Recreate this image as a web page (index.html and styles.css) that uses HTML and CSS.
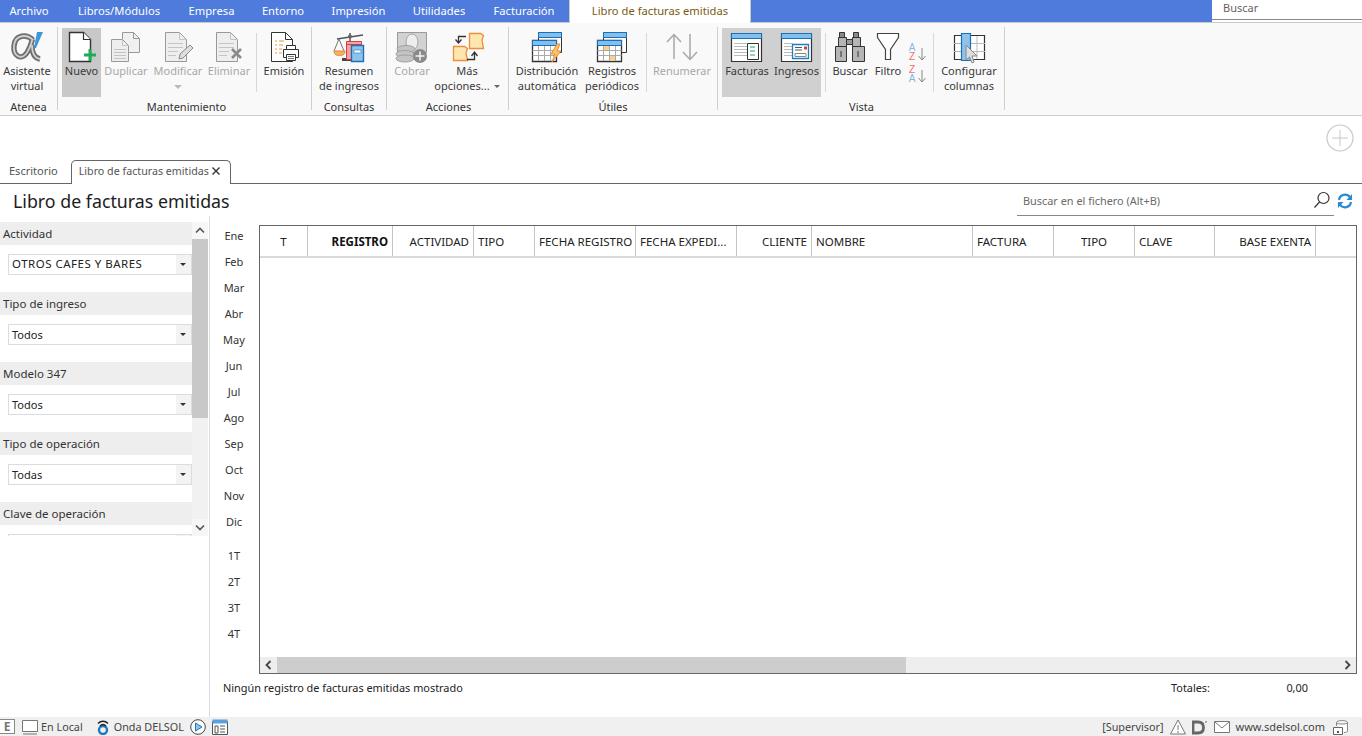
FILE: index.html
```html
<!DOCTYPE html>
<html lang="es">
<head>
<meta charset="utf-8">
<title>Libro de facturas emitidas</title>
<link rel="stylesheet" href="styles.css">
</head>
<body>
<div class="app">
  <nav class="menubar">
    <span class="mtab t63">Archivo</span>
    <span class="mtab t112">Libros/Módulos</span>
    <span class="mtab t73">Empresa</span>
    <span class="mtab t70">Entorno</span>
    <span class="mtab t81">Impresión</span>
    <span class="mtab t80">Utilidades</span>
    <span class="mtab t90">Facturación</span>
    <span class="mtab active">Libro de facturas emitidas</span>
    <span class="spacer"></span>
    <span class="topsearch"><span class="topsearch-in">Buscar</span></span>
  </nav>

  <section class="ribbon">
    <div class="group g-atenea">
      <div class="btns">
        <div class="btn w54">
          <svg class="ico" viewBox="0 0 40 32"><path d="M26 9C20 3 8 3 7 15C6 25 14 29 19 23C22 19 24 14 25.500 8M25 14C25 22 27 27 33 28" fill="none" stroke="#6f6f6f" stroke-width="5.400"/><path d="M26 9C20 3 8 3 7 15C6 25 14 29 19 23C22 19 24 14 25.500 8M25 14C25 22 27 27 33 28" fill="none" stroke="#cfcfcf" stroke-width="1.800"/><path d="M30 1H36L29 17H27Z" fill="#3f97d8"/></svg>
          <span class="lbl">Asistente<br>virtual</span>
        </div>
      </div>
      <div class="gname">Atenea</div>
    </div>

    <div class="group g-mant">
      <div class="btns">
        <div class="btn w39 on">
          <svg class="ico" viewBox="0 0 40 32"><path d="M7.5 1.5H21.500L28.500 8.500V30.500H7.500Z" fill="#fff" stroke="#333" stroke-width="1.400"/><path d="M21.500 1.500V8.500H28.500" fill="#fff" stroke="#333" stroke-width="1.200"/><path d="M28 18V30M22 24H34" stroke="#1dab57" stroke-width="3" fill="none"/></svg>
          <span class="lbl">Nuevo</span>
        </div>
        <div class="btn w50 off">
          <svg class="ico" viewBox="0 0 40 32"><path d="M16.500 1.500H27.500L33.500 7.500V21.500H16.500Z" fill="#f0f0f0" stroke="#999"/><path d="M27.500 1.500V7.500H33.500" fill="none" stroke="#999"/><path d="M5.500 8.500H16.500L22.500 14.500V30.500H5.500Z" fill="#eee" stroke="#999"/><path d="M16.500 8.500V14.500H22.500M8 18.500H20M8 21.500H20M8 24.500H20M8 27.500H20" fill="none" stroke="#c4c4c4"/></svg>
          <span class="lbl">Duplicar</span>
        </div>
        <div class="btn w54 off">
          <svg class="ico" viewBox="0 0 40 32"><path d="M7.500 1.500H21.500L28.500 8.500V30.500H7.500Z" fill="#eee" stroke="#999"/><path d="M21.500 1.500V8.500H28.500M10 12.500H25M10 16.500H25M10 20.500H20M10 24.500H18" fill="none" stroke="#c4c4c4"/><path d="M21 28L22 23L32 14L35 17L25 27Z" fill="#ddd" stroke="#8a8a8a"/></svg>
          <span class="lbl">Modificar</span>
          <span class="caret big"></span>
        </div>
        <div class="btn w48 off">
          <svg class="ico" viewBox="0 0 40 32"><path d="M7.500 1.500H21.500L28.500 8.500V30.500H7.500Z" fill="#eee" stroke="#999"/><path d="M21.500 1.500V8.500H28.500M10 12.500H25M10 16.500H25M10 20.500H20M10 24.500H18" fill="none" stroke="#c4c4c4"/><path d="M23 18L32 27M32 18L23 27" stroke="#8a8a8a" stroke-width="2.600"/></svg>
          <span class="lbl">Eliminar</span>
        </div>
        <span class="vsep"></span>
        <div class="btn w48">
          <svg class="ico" viewBox="0 0 40 32"><path d="M7.500 1.500H21.500L28.500 8.500V30.500H7.500Z" fill="#fff" stroke="#333"/><path d="M21.500 1.500V8.500H28.500" fill="none" stroke="#333"/><path d="M11 10H13M15 10H20M11 14H13M15 14H19M11 18H13M15 18H18M11 22H13M15 22H18" stroke="#f0963c"/><path d="M22.500 14.500H31.500V18.500H22.500Z" fill="#fff" stroke="#333"/><path d="M19.500 18.500H34.500V26.500H19.500Z" fill="#fff" stroke="#333"/><path d="M22.500 23.500H31.500V29.500H22.500Z" fill="#fff" stroke="#333"/><path d="M24 25.500H30M24 27.500H30" stroke="#777"/></svg>
          <span class="lbl">Emisión</span>
        </div>
      </div>
      <div class="gname">Mantenimiento</div>
    </div>

    <div class="group g-cons">
      <div class="btns">
        <div class="btn w74">
          <svg class="ico" viewBox="0 0 40 32"><path d="M8 8L34 4M21 2V28M15 29H26" fill="none" stroke="#555" stroke-width="1.500"/><path d="M13 27H28V30H13Z" fill="#444"/><circle cx="21" cy="5.500" r="2" fill="#666"/><path d="M10 8L5 20M10 8L15 20" stroke="#777" fill="none"/><path d="M5 20H16C16 24 13 24.500 10.500 24.500C8 24.500 5 24 5 20Z" fill="#f4b266" stroke="#e08a33"/><path d="M17.500 10.500H32.500V28.500H17.500Z" fill="#f7a3a3" stroke="#e53b3b"/><path d="M17.500 13.500H32.500" stroke="#e53b3b"/><path d="M22.500 14.500H34.500V30.500H22.500Z" fill="#8cc4ee" stroke="#1e6fb4" stroke-width="1.400"/><path d="M25 19H32V22H25Z" fill="#fff" stroke="#1e6fb4" stroke-width=".6"/></svg>
          <span class="lbl">Resumen<br>de ingresos</span>
        </div>
      </div>
      <div class="gname">Consultas</div>
    </div>

    <div class="group g-acc">
      <div class="btns">
        <div class="btn w50 off">
          <svg class="ico" viewBox="0 0 40 32"><path d="M5.500 1.500H34.500V21.500H5.500Z" fill="#d2d2d2" stroke="#9a9a9a"/><ellipse cx="20" cy="11" rx="6" ry="8" fill="#eee" stroke="#a5a5a5"/><ellipse cx="14" cy="18" rx="9" ry="3.500" fill="#c4c4c4" stroke="#a0a0a0"/><ellipse cx="13" cy="23" rx="9" ry="3.500" fill="#c4c4c4" stroke="#a0a0a0"/><ellipse cx="13" cy="27.500" rx="9" ry="3.500" fill="#c4c4c4" stroke="#a0a0a0"/><circle cx="28" cy="25" r="7" fill="#8a8a8a"/><path d="M28 20.500V29.500M23.500 25H32.500" stroke="#f4f4f4" stroke-width="1.500"/></svg>
          <span class="lbl">Cobrar</span>
        </div>
        <div class="btn w60">
          <svg class="ico" viewBox="0 0 40 32"><path d="M22.500 2.500H33.500L36.500 4.500L35 9L36.500 17.500H22.500Z" fill="#fde7ae" stroke="#ee8d3a" stroke-width="1.300"/><path d="M6.500 15.500H17.500L20.500 17.500L19 22L20.500 29.500H6.500Z" fill="#fde7ae" stroke="#ee8d3a" stroke-width="1.300"/><path d="M19 5.500H11.500V11M8.500 8.500L11.500 12L14.500 8.500" fill="none" stroke="#333" stroke-width="1.300"/><path d="M20 28.500H27.500V22M24.500 25L27.500 21L30.500 25" fill="none" stroke="#333" stroke-width="1.300"/></svg>
          <span class="lbl">Más<br>opciones...<span class="caret"></span></span>
        </div>
      </div>
      <div class="gname shift-r">Acciones</div>
    </div>

    <div class="group g-util">
      <div class="btns">
        <div class="btn w76">
          <svg class="ico" viewBox="0 0 40 32"><path d="M11.500 1.500H34.500V21.500H11.500Z" fill="#fff" stroke="#333"/><path d="M11.500 1.500H34.500V6.500H11.500Z" fill="#7fc0ee" stroke="#1e6fb4"/><path d="M5.500 9.500H29.500V30.500H5.500Z" fill="#fff" stroke="#333" stroke-width="1.300"/><path d="M5.500 9.500H29.500V14.500H5.500Z" fill="#7fc0ee" stroke="#1e6fb4"/><path d="M5.500 19.500H29.500M5.500 24.500H29.500M11.500 15V30M17.500 15V30M23.500 15V30" stroke="#aaa"/><path d="M30 13L24 23H28L25 31L34 20H30L33 13Z" fill="#fbc36b" stroke="#ef8a2e"/></svg>
          <span class="lbl">Distribución<br>automática</span>
        </div>
        <div class="btn w54">
          <svg class="ico" viewBox="0 0 40 32"><path d="M11.500 1.500H34.500V21.500H11.500Z" fill="#fff" stroke="#333"/><path d="M11.500 1.500H34.500V6.500H11.500Z" fill="#7fc0ee" stroke="#1e6fb4"/><path d="M5.500 9.500H29.500V30.500H5.500Z" fill="#fff" stroke="#333" stroke-width="1.300"/><path d="M5.500 9.500H29.500V14.500H5.500Z" fill="#7fc0ee" stroke="#1e6fb4"/><path d="M5.500 19.500H29.500M5.500 24.500H29.500M11.500 15V30M17.500 15V30M23.500 15V30" stroke="#aaa"/><path d="M12 15H17V19H12ZM18 25H23V30H18Z" fill="#f8d28a"/></svg>
          <span class="lbl">Registros<br>periódicos</span>
        </div>
        <span class="vsep sep-r"></span>
        <div class="btn w70 off">
          <svg class="ico" viewBox="0 0 40 32"><path d="M12 28V4M5 11L12 3.500L19 11M28 3V28M21 21L28 28.500L35 21" fill="none" stroke="#a8a8a8" stroke-width="1.500"/></svg>
          <span class="lbl">Renumerar</span>
        </div>
      </div>
      <div class="gname">Útiles</div>
    </div>

    <div class="group g-vista">
      <div class="btns">
        <div class="btn w50 on2">
          <svg class="ico" viewBox="0 0 40 32"><path d="M4.500 2.500H34.500V30.500H4.500Z" fill="#fff" stroke="#333" stroke-width="1.200"/><path d="M4.500 2.500H34.500V7.500H4.500Z" fill="#7fc0ee" stroke="#1e6fb4"/><path d="M7 12.500H20M7 15.500H20M7 18.500H20M7 21.500H20M7 24.500H20" stroke="#bbb"/><path d="M20.500 12.500H31.500V28.500H20.500Z" fill="#fff" stroke="#333"/><path d="M23 16H28M23 20H28M23 24H28" stroke="#1dab57"/></svg>
          <span class="lbl">Facturas</span>
        </div>
        <div class="btn w49 on2">
          <svg class="ico" viewBox="0 0 40 32"><path d="M4.500 2.500H34.500V30.500H4.500Z" fill="#fff" stroke="#333" stroke-width="1.200"/><path d="M4.500 2.500H34.500V7.500H4.500Z" fill="#7fc0ee" stroke="#1e6fb4"/><path d="M7 12.500H16M7 15.500H16M7 18.500H16M7 21.500H16M7 24.500H16" stroke="#bbb"/><path d="M15.500 13.500H31.500V27.500H15.500Z" fill="#fff" stroke="#1e7fc4" stroke-width="1.300"/><path d="M18 16.500H25M18 19H25" stroke="#555"/><path d="M27 15.500H30V18.500H27Z" fill="#e53b3b"/><path d="M18 22.500H29V25.500H18Z" fill="#fff" stroke="#888"/></svg>
          <span class="lbl">Ingresos</span>
        </div>
        <span class="vsep sep-a"></span>
        <div class="btn w48">
          <svg class="ico" viewBox="0 0 40 32"><path d="M9.500 1.500H14.500V6.500H9.500ZM23.500 1.500H28.500V6.500H23.500Z" fill="#8a8a8a" stroke="#333"/><path d="M8.500 6.500H16.500V15.500H8.500ZM22.500 6.500H30.500V15.500H22.500Z" fill="#b5b5b5" stroke="#333"/><path d="M16.500 8.500H22.500V13.500H16.500Z" fill="#999" stroke="#333"/><path d="M5.500 15.500H16.500V30.500H5.500ZM22.500 15.500H34.500V30.500H22.500Z" fill="#b5b5b5" stroke="#333"/><path d="M11 20V26M28 20V26" stroke="#333"/></svg>
          <span class="lbl">Buscar</span>
        </div>
        <div class="btn w28">
          <svg class="ico" viewBox="0 0 40 32"><path d="M9.500 2.500H30.500V6.500L22.500 18.500V28.500H17.500V18.500L9.500 6.500Z" fill="#fff" stroke="#444" stroke-width="1.200"/></svg>
          <span class="lbl">Filtro</span>
        </div>
        <div class="sortbtn">
          <svg class="sortico" viewBox="0 0 24 42"><g font-family="Liberation Sans, sans-serif" font-size="10" text-anchor="middle"><text x="7" y="9" fill="#7fb8e6">A</text><text x="7" y="18" fill="#ef6f6f">Z</text><text x="7" y="31" fill="#ef6f6f">Z</text><text x="7" y="40" fill="#7fb8e6">A</text></g><path d="M17 6V18M13.500 14L17 18L20.500 14M17 28V40M13.500 36L17 40L20.500 36" fill="none" stroke="#888"/></svg>
        </div>
        <span class="vsep sep-b"></span>
        <div class="btn w70">
          <svg class="ico" viewBox="0 0 40 32"><path d="M5.500 4.500H35.500V28.500H5.500Z" fill="#fff" stroke="#333" stroke-width="1.200"/><path d="M5 12.500H36M5 20.500H36M28 5V28" stroke="#bbb"/><path d="M12.500 2.500H21.500V29.500H12.500Z" fill="#8cc4ee" stroke="#1e6fb4" stroke-width="1.200"/><path d="M5.500 12.500H12M5.500 20.500H12" stroke="#aaa"/><path d="M17 14V29L20.500 26L23 32L25 31L23 25H28Z" fill="#ddd" stroke="#888"/></svg>
          <span class="lbl">Configurar<br>columnas</span>
        </div>
      </div>
      <div class="gname shift-l">Vista</div>
    </div>
  </section>

  <div class="plusrow">
    <svg class="plus" viewBox="0 0 28 28"><circle cx="14" cy="14" r="13" fill="#fff" stroke="#c8c8c8" stroke-width="1.200"/><path d="M14 6V22M6 14H22" stroke="#c8c8c8"/></svg>
  </div>

  <div class="docstrip">
    <span class="doctab">Escritorio</span>
    <span class="doctab cur">Libro de facturas emitidas<svg class="closex" viewBox="0 0 10 10"><path d="M1.500 1.500L8.500 8.500M8.500 1.500L1.500 8.500" stroke="#333" stroke-width="1.400"/></svg></span>
  </div>

  <header class="titlerow">
    <h1 class="title">Libro de facturas emitidas</h1>
    <div class="filesearch">
      <span class="filesearch-t">Buscar en el fichero (Alt+B)</span>
      <svg class="mag" viewBox="0 0 18 18"><circle cx="10.500" cy="7" r="5.500" fill="none" stroke="#333" stroke-width="1.200"/><path d="M6.500 11L1.500 16.500" stroke="#333" stroke-width="1.200"/></svg>
    </div>
    <svg class="refresh" viewBox="0 0 16 16"><path d="M2 7A6 6 0 0 1 13 4.500M14 9A6 6 0 0 1 3 11.500" fill="none" stroke="#2a8ad4" stroke-width="2.200"/><path d="M15 1V7H9.500ZM1 15V9H6.500Z" fill="#2a8ad4"/></svg>
  </header>

  <main class="main">
    <aside class="side">
      <div class="sidewrap">
        <div class="filters">
          <div class="fhead">Actividad</div>
          <div class="fsel"><span class="caps">OTROS CAFES Y BARES</span><i class="farrow"></i></div>
          <div class="fhead">Tipo de ingreso</div>
          <div class="fsel"><span>Todos</span><i class="farrow"></i></div>
          <div class="fhead">Modelo 347</div>
          <div class="fsel"><span>Todos</span><i class="farrow"></i></div>
          <div class="fhead">Tipo de operación</div>
          <div class="fsel"><span>Todas</span><i class="farrow"></i></div>
          <div class="fhead">Clave de operación</div>
          <div class="fsel"><span></span><i class="farrow"></i></div>
        </div>
        <div class="vscroll">
          <svg class="sarrow" viewBox="0 0 16 17"><path d="M4 10.500L8 6.500L12 10.500" fill="none" stroke="#555" stroke-width="1.600"/></svg>
          <div class="vtrack"><div class="vthumb"></div></div>
          <svg class="sarrow" viewBox="0 0 16 17"><path d="M4 6.500L8 10.500L12 6.500" fill="none" stroke="#555" stroke-width="1.600"/></svg>
        </div>
      </div>
    </aside>

    <div class="months">
      <span>Ene</span><span>Feb</span><span>Mar</span><span>Abr</span><span>May</span><span>Jun</span><span>Jul</span><span>Ago</span><span>Sep</span><span>Oct</span><span>Nov</span><span>Dic</span>
      <span class="q1">1T</span><span>2T</span><span>3T</span><span>4T</span>
    </div>

    <div class="content">
      <div class="grid">
        <div class="ghead">
          <div class="c c48 mid">T</div>
          <div class="c c85 rt bold">REGISTRO</div>
          <div class="c c81 rt">ACTIVIDAD</div>
          <div class="c c61">TIPO</div>
          <div class="c c101">FECHA REGISTRO</div>
          <div class="c c101">FECHA EXPEDI...</div>
          <div class="c c75 rt">CLIENTE</div>
          <div class="c c161">NOMBRE</div>
          <div class="c c81">FACTURA</div>
          <div class="c c81 mid">TIPO</div>
          <div class="c c80">CLAVE</div>
          <div class="c c101 rt">BASE EXENTA</div>
        </div>
        <div class="gbody"></div>
        <div class="hscroll">
          <svg class="harrow" viewBox="0 0 17 16"><path d="M10.500 4L6.500 8L10.500 12" fill="none" stroke="#444" stroke-width="1.800"/></svg>
          <div class="htrack"><div class="hthumb"></div></div>
          <svg class="harrow" viewBox="0 0 17 16"><path d="M6.500 4L10.500 8L6.500 12" fill="none" stroke="#444" stroke-width="1.800"/></svg>
        </div>
      </div>
      <div class="gfoot">
        <span class="gmsg">Ningún registro de facturas emitidas mostrado</span>
        <span class="gtot">Totales:</span>
        <span class="gval">0,00</span>
      </div>
    </div>
  </main>

  <footer class="status">
    <span class="ebox">E</span>
    <svg class="st st-mon" viewBox="0 0 16 16"><path d="M.5 1.500H15.500V12.500H.5Z" fill="#fff" stroke="#777"/><path d="M1 15H15" stroke="#777"/></svg>
    <span class="st-t enlocal">En Local</span>
    <svg class="st st-onda" viewBox="0 0 16 16"><circle cx="8" cy="11" r="4" fill="none" stroke="#1d78c4" stroke-width="2.400"/><path d="M3 4.500C6 1.500 10 1.500 13 4.500M5 7C7 5 9 5 11 7" fill="none" stroke="#222" stroke-width="1.600"/></svg>
    <span class="st-t onda">Onda DELSOL</span>
    <svg class="st st-play" viewBox="0 0 16 16"><circle cx="8" cy="8" r="7.300" fill="#fff" stroke="#444"/><path d="M5.500 4L12 8L5.500 12Z" fill="#8cc4ee" stroke="#1e78c4"/></svg>
    <svg class="st st-win" viewBox="0 0 16 16"><path d="M.5 2.500H15.500V15.500H.5Z" fill="#fff" stroke="#555"/><path d="M.5 .5H15.500V4.500H.5Z" fill="#5aa0dc"/><path d="M3 7H6V14H3ZM8 7H13M8 10H13M8 13H13" fill="none" stroke="#555"/></svg>
    <span class="spacer"></span>
    <span class="st-t sup">[Supervisor]</span>
    <svg class="st st-tri" viewBox="0 0 16 16"><path d="M8 1L15.500 15H.5Z" fill="#fff" stroke="#777"/><path d="M8 6V11M8 12V14" stroke="#777"/></svg>
    <svg class="st st-d" viewBox="0 0 16 16"><path d="M1 3H6C10 3 11.500 5.500 11.500 8.500C11.500 11.500 10 14 6 14H1Z" fill="none" stroke="#666" stroke-width="2.800"/><path d="M13 2H15V4H13Z" fill="#aaa"/></svg>
    <svg class="st st-mail" viewBox="0 0 16 16"><path d="M.5 2.500H15.500V13.500H.5Z" fill="#fff" stroke="#777"/><path d="M1 3L8 9L15 3" fill="none" stroke="#777"/></svg>
    <span class="st-t web">www.sdelsol.com</span>
    <svg class="st st-db" viewBox="0 0 16 16"><path d="M4.500 3.500C4.500 1 15.500 1 15.500 3.500V12C15.500 13 14 13.500 12 13.500M4.500 3.500C4.500 5.500 15.500 5.500 15.500 3.500M4.500 3.500V7" fill="#fff" stroke="#888"/><path d="M1.500 8.500H10.500V15.500H1.500Z" fill="#fff" stroke="#666"/><path d="M5 12H7V14H5Z" fill="#555"/></svg>
  </footer>
</div>
</body>
</html>
```

FILE: styles.css
```css
* { box-sizing: border-box; }
html, body { margin: 0; padding: 0; height: 100%; background: #fff; overflow: hidden; }
body { font: 11.5px/15px "Noto Sans", "Open Sans", sans-serif; color: #222; }
.app { width: 1362px; height: 736px; display: flex; flex-direction: column; }
.spacer { flex: 1; }

/* top menu */
.menubar { height: 23px; flex: none; display: flex; background: #4e7bdc; border-bottom: 1px solid #c9c9c9; color: #fff; font-size: 11.200px; }
.mtab { line-height: 22px; white-space: nowrap; text-align: center; flex: none; }
.t63 { width: 58px; margin-right: 5px; }
.t112 { width: 112px; }
.t73 { width: 73px; }
.t70 { width: 70px; }
.t81 { width: 81px; }
.t80 { width: 80px; }
.t90 { width: 90px; }
.mtab.active { background: #fff; color: #7a5a10; width: 182px; height: 23px; border-left: 1px solid #c9c9c9; border-right: 1px solid #c9c9c9; }
.topsearch { width: 150px; background: #fff; height: 22px; }
.topsearch-in { display: block; height: 20px; border-bottom: 1px solid #888; padding-left: 11px; line-height: 16px; color: #6a5f5f; font-size: 11px; }

/* ribbon */
.ribbon { height: 93px; flex: none; display: flex; background: #f9f9f9; border-bottom: 1px solid #cfcfcf; padding-top: 4px; }
.group { display: flex; flex-direction: column; height: 83px; border-right: 1px solid #cfcfcf; flex: none; }
.g-atenea { width: 58px; }
.g-mant { width: 254px; padding-left: 4px; }
.g-cons { width: 75px; }
.g-acc { width: 122px; }
.g-util { width: 209px; }
.g-vista { width: 287px; padding-left: 4px; }
.btns { display: flex; height: 70px; margin-top: 1px; flex: none; }
.gname { text-align: center; line-height: 14px; margin-top: 2px; color: #333; font-size: 11px; }
.shift-r { padding-left: 2px; }
.shift-l { padding-right: 3px; }
.btn { display: flex; flex-direction: column; align-items: center; padding-top: 3px; height: 69px; flex: none; text-align: center; color: #3a3a3a; position: relative; font-size: 11px; }
.btn.on { background: #c8c8c8; }
.btn.on2 { background: #d0d0d0; }
.btn.off { color: #a8a8a8; }
.ico { width: 40px; height: 32px; flex: none; display: block; }
.lbl { display: block; line-height: 15px; white-space: nowrap; }
.w28 { width: 28px; } .w39 { width: 39px; } .w48 { width: 48px; } .w49 { width: 49px; } .w50 { width: 50px; }
.w54 { width: 54px; } .w60 { width: 60px; } .w70 { width: 70px; } .w74 { width: 74px; } .w76 { width: 76px; }
.vsep { width: 1px; height: 59px; margin: 5px 3px 0; background: #d8d8d8; flex: none; }
.sep-r { margin: 5px 0 0 7px; }
.sep-a { margin: 5px 0 0 4px; }
.sep-b { margin: 5px 0 0 1px; }
.caret { display: inline-block; width: 0; height: 0; border: 3px solid transparent; border-top: 3px solid #666; border-bottom: 0; margin-left: 4px; vertical-align: 2px; }
.caret.big { border-width: 4px 4px 0; border-top-color: #bbb; margin: 7px 0 0; }
.sortbtn { width: 30px; flex: none; padding: 14px 3px 0; }
.sortico { display: block; width: 24px; height: 42px; }

/* plus */
.plusrow { height: 44px; flex: none; display: flex; justify-content: flex-end; padding: 8px 8px 0 0; }
.plus { width: 28px; height: 28px; }

/* doc tabs */
.docstrip { height: 24px; flex: none; display: flex; border-bottom: 1px solid #666; padding-left: 9px; font-size: 11px; color: #555; }
.doctab { line-height: 22px; white-space: nowrap; }
.doctab.cur { width: 160px; height: 24px; margin-left: 13px; background: #fff; border: 1px solid #666; border-bottom: 0; border-radius: 5px 5px 0 0; padding-left: 7px; display: flex; align-items: flex-start; font-size: 10.700px; line-height: 20px; }
.closex { width: 10px; height: 10px; margin: 5px 0 0 2px; flex: none; }

/* title */
.titlerow { height: 32px; flex: none; display: flex; align-items: flex-start; }
.title { margin: 5px 0 0 13px; font: 400 17.800px/24px "Noto Sans", sans-serif; color: #1c1c1c; flex: 1; }
.filesearch { width: 317px; height: 32px; border-bottom: 1px solid #888; display: flex; align-items: center; padding: 1px 3px 0 6px; color: #6a6a6a; font-size: 10.900px; justify-content: space-between; }
.mag { width: 18px; height: 18px; }
.refresh { width: 16px; height: 16px; margin: 9px 9px 0 3px; flex: none; }

/* main */
.main { flex: 1; display: flex; min-height: 0; }
.side { width: 210px; flex: none; border-right: 1px solid #dcdcdc; padding-top: 6px; }
.sidewrap { display: flex; height: 314px; }
.filters { width: 192px; overflow: hidden; flex: none; }
.fhead { height: 23px; line-height: 24px; background: #eee; padding-left: 3px; color: #333; }
.fsel { height: 21px; margin: 9px 0 17px 8px; border: 1px solid #dcdcdc; background: #fff; display: flex; align-items: center; justify-content: space-between; padding-left: 3px; color: #222; font-size: 11px; }
.caps { font-size: 11.500px; letter-spacing: .5px; white-space: nowrap; margin-bottom: 2px; }
.farrow { width: 15px; height: 19px; background: #f3f3f3; position: relative; display: block; flex: none; }
.farrow::after { content: ""; position: absolute; left: 4px; top: 8px; border: 3px solid transparent; border-top: 3px solid #333; border-bottom: 0; }
.vscroll { width: 16px; display: flex; flex-direction: column; background: #f1f1f1; flex: none; }
.sarrow { width: 16px; height: 17px; flex: none; background: #f6f6f6; }
.vtrack { flex: 1; min-height: 0; }
.vthumb { height: 179px; background: #c8c8c8; }

.months { width: 49px; flex: none; display: flex; flex-direction: column; align-items: center; padding-top: 7px; font-size: 11px; color: #333; padding-right: 1px; }
.months span { height: 26px; line-height: 26px; flex: none; }
.months .q1 { margin-top: 8px; }

.content { flex: 1; display: flex; flex-direction: column; padding: 9px 5px 0 0; min-width: 0; }
.grid { height: 449px; border: 1px solid #666; display: flex; flex-direction: column; flex: none; }
.ghead { height: 32px; display: flex; border-bottom: 2px solid #dadada; flex: none; }
.c { height: 30px; line-height: 31px; border-right: 1px solid #c4c4c4; padding: 0 4px; white-space: nowrap; overflow: hidden; flex: none; color: #222; }
.mid { text-align: center; } .rt { text-align: right; } .bold { font-weight: 700; color: #111; }
.c48 { width: 48px; } .c61 { width: 61px; } .c75 { width: 75px; } .c80 { width: 80px; } .c81 { width: 81px; } .c85 { width: 85px; } .c101 { width: 101px; } .c161 { width: 161px; }
.gbody { flex: 1; min-height: 0; }
.hscroll { height: 16px; display: flex; background: #eee; flex: none; }
.harrow { width: 17px; height: 16px; flex: none; }
.htrack { flex: 1; }
.hthumb { width: 629px; height: 16px; background: #cdcdcd; }
.gfoot { display: flex; padding: 6px 49px 0 0; font-size: 10.900px; color: #222; }
.gmsg { margin-left: -36px; width: 948px; flex: none; }
.gtot { flex: 1; }
.gval { flex: none; }

/* status */
.status { height: 19px; flex: none; background: #f0f0f0; display: flex; align-items: center; color: #444; font-size: 10.800px; }
.ebox { width: 15px; height: 15px; border: 1px solid #888; border-left: 0; background: #fff; color: #777; font: 700 12px/13px "Noto Sans", sans-serif; text-align: center; flex: none; }
.st { width: 16px; height: 16px; flex: none; }
.st-mon { margin-left: 7px; }
.st-t { white-space: nowrap; flex: none; }
.enlocal { margin-left: 3px; }
.st-onda { margin-left: 12px; }
.onda { margin-left: 3px; }
.st-play { margin-left: 6px; }
.st-win { margin-left: 6px; }
.st-tri { margin-left: 6px; }
.st-d { margin-left: 6px; }
.st-mail { margin-left: 6px; }
.web { margin-left: 6px; font-size: 11px; }
.st-db { margin: 0 14px 0 7px; }
```
